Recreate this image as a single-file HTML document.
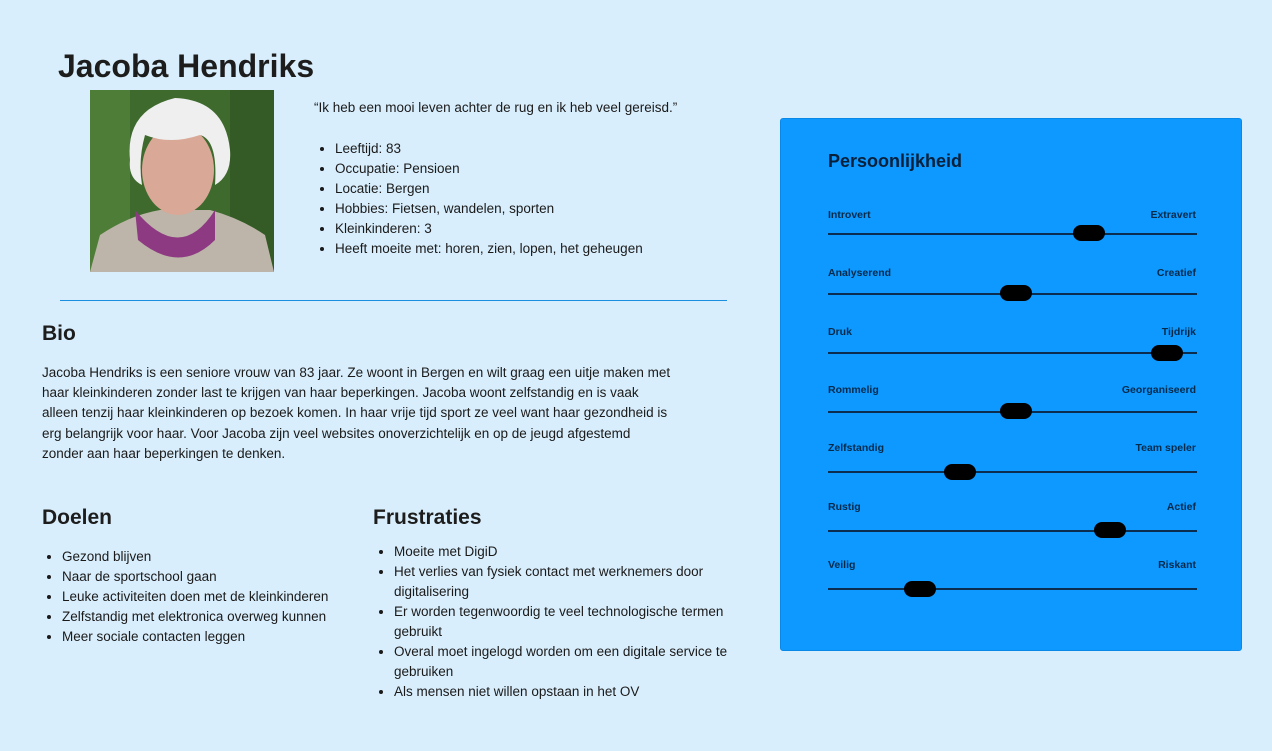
<!DOCTYPE html>
<html><head><meta charset="utf-8"><style>
*{margin:0;padding:0;box-sizing:border-box}
body{width:1272px;height:751px;background:#d9eefc;font-family:"Liberation Sans",sans-serif;color:#1a1a1a;position:relative;overflow:hidden}
.a{position:absolute}
h1{position:absolute;left:58px;top:48px;font-size:32px;font-weight:bold;letter-spacing:0;color:#1d1d1d}
h2{position:absolute;font-size:21px;font-weight:bold;color:#1d1d1d}
ul{position:absolute;font-size:13.5px;line-height:20px;padding-left:20px}
p{font-size:13.5px;line-height:20.2px}
.panel{left:780px;top:118px;width:462px;height:533px;background:#0d99ff;border-radius:3px;border:1px solid #0a88e8}
.lbl{position:absolute;font-size:10.5px;font-weight:bold;color:#062a4a}
.line{position:absolute;left:47px;width:369px;height:1.5px;background:#0a2d50}
.knob{position:absolute;width:32px;height:16px;border-radius:8px;background:#000}
</style></head><body>
<h1>Jacoba Hendriks</h1>
<svg class="a" style="left:90px;top:90px" width="184" height="182" viewBox="0 0 184 182">
<rect width="184" height="182" fill="#3f6a2e"/>
<rect x="0" y="0" width="40" height="182" fill="#4e7d38"/>
<rect x="140" y="0" width="44" height="182" fill="#345a26"/>
<path d="M0 182 L10 145 Q40 125 70 120 L120 120 Q150 128 175 145 L184 182Z" fill="#bdb5aa"/>
<path d="M45 120 Q90 175 125 120 L125 150 Q90 185 48 150Z" fill="#8e3a82"/>
<ellipse cx="88" cy="80" rx="36" ry="45" fill="#d9a896"/>
<path d="M40 70 Q35 20 85 8 Q135 10 140 60 Q142 85 125 95 Q128 50 110 45 Q80 55 55 45 Q48 70 52 95 Q38 88 40 70Z" fill="#efefef"/>
</svg>
<div class="a" style="left:314px;top:100px;font-size:13.5px">“Ik heb een mooi leven achter de rug en ik heb veel gereisd.”</div>
<ul style="left:315px;top:139px">
<li>Leeftijd: 83</li><li>Occupatie: Pensioen</li><li>Locatie: Bergen</li><li>Hobbies: Fietsen, wandelen, sporten</li><li>Kleinkinderen: 3</li><li>Heeft moeite met: horen, zien, lopen, het geheugen</li></ul>
<div class="a" style="left:60px;top:300px;width:667px;height:1px;background:#1a8fe0"></div>
<h2 style="left:42px;top:322px">Bio</h2>
<p class="a" style="left:42px;top:363px;white-space:nowrap">Jacoba Hendriks is een seniore vrouw van 83 jaar. Ze woont in Bergen en wilt graag een uitje maken met<br>haar kleinkinderen zonder last te krijgen van haar beperkingen. Jacoba woont zelfstandig en is vaak<br>alleen tenzij haar kleinkinderen op bezoek komen. In haar vrije tijd sport ze veel want haar gezondheid is<br>erg belangrijk voor haar. Voor Jacoba zijn veel websites onoverzichtelijk en op de jeugd afgestemd<br>zonder aan haar beperkingen te denken.</p>
<h2 style="left:42px;top:506px">Doelen</h2>
<ul style="left:42px;top:547px"><li>Gezond blijven</li><li>Naar de sportschool gaan</li><li>Leuke activiteiten doen met de kleinkinderen</li><li>Zelfstandig met elektronica overweg kunnen</li><li>Meer sociale contacten leggen</li></ul>
<h2 style="left:373px;top:506px">Frustraties</h2>
<ul style="left:374px;top:542px;width:370px"><li>Moeite met DigiD</li><li>Het verlies van fysiek contact met werknemers door digitalisering</li><li>Er worden tegenwoordig te veel technologische termen gebruikt</li><li>Overal moet ingelogd worden om een digitale service te gebruiken</li><li>Als mensen niet willen opstaan in het OV</li></ul>
<div class="a panel">
<div class="a" style="left:47px;top:32px;font-size:18px;font-weight:bold;color:#06203a">Persoonlijkheid</div>
<div class="lbl" style="left:47px;top:90px">Introvert</div><div class="lbl" style="right:45px;top:90px">Extravert</div><div class="line" style="top:114px"></div><div class="knob" style="left:292px;top:106px"></div>
<div class="lbl" style="left:47px;top:148px">Analyserend</div><div class="lbl" style="right:45px;top:148px">Creatief</div><div class="line" style="top:174px"></div><div class="knob" style="left:219px;top:166px"></div>
<div class="lbl" style="left:47px;top:207px">Druk</div><div class="lbl" style="right:45px;top:207px">Tijdrijk</div><div class="line" style="top:233px"></div><div class="knob" style="left:370px;top:226px"></div>
<div class="lbl" style="left:47px;top:265px">Rommelig</div><div class="lbl" style="right:45px;top:265px">Georganiseerd</div><div class="line" style="top:292px"></div><div class="knob" style="left:219px;top:284px"></div>
<div class="lbl" style="left:47px;top:323px">Zelfstandig</div><div class="lbl" style="right:45px;top:323px">Team speler</div><div class="line" style="top:352px"></div><div class="knob" style="left:163px;top:345px"></div>
<div class="lbl" style="left:47px;top:382px">Rustig</div><div class="lbl" style="right:45px;top:382px">Actief</div><div class="line" style="top:411px"></div><div class="knob" style="left:313px;top:403px"></div>
<div class="lbl" style="left:47px;top:440px">Veilig</div><div class="lbl" style="right:45px;top:440px">Riskant</div><div class="line" style="top:469px"></div><div class="knob" style="left:123px;top:462px"></div>
</div>
</body></html>
